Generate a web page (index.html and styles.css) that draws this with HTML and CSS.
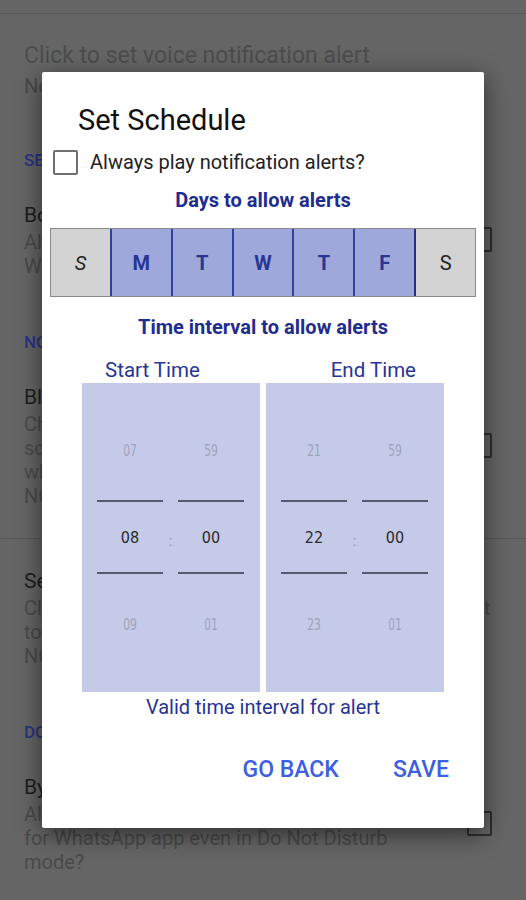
FILE: index.html
```html
<!DOCTYPE html>
<html lang="en">
<head>
<title>Set Schedule</title>
<link rel="stylesheet" href="styles.css">
</head>
<body>
<div class="page">
    <div class="topline"></div>

    <div class="voice">
        <div class="voice-title">Click to set voice notification alert</div>
        <div class="summary">Not set</div>
    </div>

    <div class="section first">SETTINGS</div>

    <div class="pref">
        <div class="pref-text">
            <div class="title">Bold reading</div>
            <div class="summary">Always read the sender</div>
            <div class="summary">When a message arrives</div>
        </div>
        <div class="box"></div>
    </div>

    <div class="section">NOTIFICATIONS</div>

    <div class="pref">
        <div class="pref-text">
            <div class="title">Block on schedule</div>
            <div class="summary">Check to allow alerts</div>
            <div class="summary">schedule of days and hours</div>
            <div class="summary">while outside they are</div>
            <div class="summary">NOT played</div>
        </div>
        <div class="box"></div>
    </div>

    <div class="divider"></div>

    <div class="pref">
        <div class="pref-text">
            <div class="title">Set schedule</div>
            <div class="summary">Click to set days and hours for alerts on this account</div>
            <div class="summary">to play alerts</div>
            <div class="summary">NOT set</div>
        </div>
    </div>

    <div class="section">DO NOT DISTURB</div>

    <div class="pref">
        <div class="pref-text">
            <div class="title">Bypass DND</div>
            <div class="summary">Allow playing alerts</div>
            <div class="summary">for WhatsApp app even in Do Not Disturb</div>
            <div class="summary">mode?</div>
        </div>
        <div class="box"></div>
    </div>
</div>

<div class="dialog">
    <div class="dlg-title">Set Schedule</div>

    <label class="always">
        <span class="check"></span>
        <span>Always play notification alerts?</span>
    </label>

    <div class="caption">Days to allow alerts</div>
    <div class="days">
        <div class="day sun">S</div>
        <div class="day on">M</div>
        <div class="day on">T</div>
        <div class="day on">W</div>
        <div class="day on">T</div>
        <div class="day on">F</div>
        <div class="day">S</div>
    </div>

    <div class="caption interval">Time interval to allow alerts</div>
    <div class="time-labels">
        <span>Start Time</span>
        <span>End Time</span>
    </div>

    <div class="pickers">
        <div class="picker">
            <div class="col">
                <div class="num">07</div>
                <div class="num sel">08</div>
                <div class="num">09</div>
            </div>
            <div class="colon">:</div>
            <div class="col">
                <div class="num">59</div>
                <div class="num sel">00</div>
                <div class="num">01</div>
            </div>
        </div>
        <div class="picker">
            <div class="col">
                <div class="num">21</div>
                <div class="num sel">22</div>
                <div class="num">23</div>
            </div>
            <div class="colon">:</div>
            <div class="col">
                <div class="num">59</div>
                <div class="num sel">00</div>
                <div class="num">01</div>
            </div>
        </div>
    </div>

    <div class="valid">Valid time interval for alert</div>

    <div class="buttons">
        <span class="btn">GO BACK</span>
        <span class="btn">SAVE</span>
    </div>
</div>
</body>
</html>
```

FILE: styles.css
```css
html, body {
    margin: 0;
    padding: 0;
    height: 100%;
    overflow: hidden;
}

body {
    background: #656565;
    font-family: Roboto, "Liberation Sans", sans-serif;
    position: relative;
}

/* dimmed settings page behind the dialog */

.page {
    padding-left: 24px;
}

.topline {
    height: 13px;
    border-bottom: 1px solid #595959;
    margin-left: -24px;
}

.voice {
    margin-top: 28px;
}

.voice-title {
    font-size: 23px;
    line-height: 28px;
    color: #4d4d4d;
    margin-bottom: 4px;
}

.pref {
    display: flex;
    align-items: center;
}

.pref-text {
    flex: 1;
    min-width: 0;
}

.title {
    font-size: 21px;
    line-height: 28px;
    color: #1e1e1e;
    margin-bottom: 1px;
}

.summary {
    font-size: 20px;
    line-height: 24px;
    color: #4a4a4a;
    white-space: nowrap;
}

.box {
    width: 21px;
    height: 21px;
    border: 2px solid #2e2e2e;
    border-radius: 2px;
    margin: 0 34px 0 12px;
    flex: none;
}

.section {
    font-size: 17px;
    font-weight: 500;
    color: #2b3285;
    line-height: 22px;
    margin: 53px 0 30px;
}

.section.first {
    margin-top: 51px;
}

.divider {
    height: 1px;
    background: #595959;
    margin: 30px 0 28px -24px;
}

/* dialog */

.dialog {
    position: absolute;
    left: 42px;
    top: 72px;
    width: 442px;
    height: 756px;
    box-sizing: border-box;
    background: #fff;
    border-radius: 2px;
    box-shadow: 0 6px 24px rgba(0, 0, 0, 0.55);
    padding-top: 31px;
}

.dlg-title {
    font-size: 29px;
    line-height: 34px;
    color: #111;
    padding-left: 36px;
}

.always {
    display: flex;
    align-items: center;
    height: 28px;
    margin-top: 11px;
    padding-left: 11px;
    font-size: 20px;
    color: #222;
}

.check {
    width: 21px;
    height: 21px;
    border: 2px solid #707070;
    border-radius: 2px;
    margin-right: 12px;
}

.caption {
    text-align: center;
    font-size: 20px;
    font-weight: bold;
    line-height: 24px;
    color: #1f2d8f;
    margin-top: 12px;
}

.days {
    display: flex;
    height: 69px;
    margin: 16px 8px 0;
    border: 1px solid #8a8a8a;
    box-sizing: border-box;
}

.day {
    flex: 1;
    display: flex;
    align-items: center;
    justify-content: center;
    background: #d3d3d3;
    font-size: 20px;
    color: #222;
}

.day.sun {
    font-style: italic;
}

.day.on {
    background: #9fa8da;
    color: #283593;
    font-weight: bold;
    border-left: 2px solid #3340a0;
}

.day.on + .day:not(.on) {
    border-left: 2px solid #26307f;
}

.caption.interval {
    margin-top: 18px;
}

.time-labels {
    display: flex;
    justify-content: space-between;
    padding: 0 68px 0 63px;
    margin-top: 19px;
    font-size: 20.5px;
    line-height: 24px;
    color: #283593;
}

.pickers {
    display: flex;
    justify-content: center;
    gap: 6px;
    margin-top: 1px;
}

.picker {
    width: 178px;
    height: 309px;
    box-sizing: border-box;
    background: #c5cae9;
    display: flex;
    padding: 23px 16px 0 15px;
}

.col {
    flex: 1;
    display: flex;
    flex-direction: column;
}

.num {
    height: 88px;
    display: flex;
    align-items: center;
    justify-content: center;
    font-family: "DejaVu Sans Condensed", "DejaVu Sans", sans-serif;
    font-size: 16px;
    color: #9fa3ba;
    transform: scaleX(0.75);
}

.num.sel {
    height: 74px;
    margin: 6px 0;
    box-sizing: border-box;
    border-top: 2px solid #555a6e;
    border-bottom: 2px solid #555a6e;
    color: #2a2a2a;
    transform: none;
}

.colon {
    width: 15px;
    padding-top: 91px;
    height: 88px;
    display: flex;
    align-items: center;
    justify-content: center;
    font-size: 14px;
    color: #8f93a8;
}

.valid {
    text-align: center;
    font-size: 20px;
    line-height: 24px;
    color: #283593;
    margin-top: 3px;
}

.buttons {
    display: flex;
    justify-content: flex-end;
    gap: 54px;
    padding-right: 35px;
    margin-top: 37px;
}

.btn {
    font-size: 23px;
    line-height: 28px;
    font-weight: 500;
    color: #3d5fe0;
}
```
